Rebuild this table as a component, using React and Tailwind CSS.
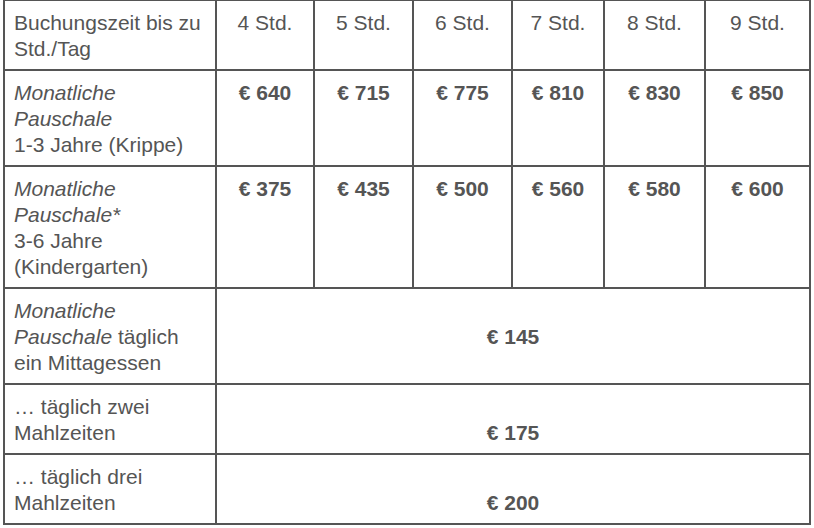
import React from "react";

const hours = ["4 Std.", "5 Std.", "6 Std.", "7 Std.", "8 Std.", "9 Std."];
const krippe = ["€ 640", "€ 715", "€ 775", "€ 810", "€ 830", "€ 850"];
const kiga = ["€ 375", "€ 435", "€ 500", "€ 560", "€ 580", "€ 600"];

const cell = "border-2 border-[#555] px-[9px] pt-[9px] pb-[7px] align-top";

export default function App() {
  return (
    <div className="bg-white min-h-screen pl-[3px] text-[#555] font-['Liberation_Sans',Arial,sans-serif] text-[21px] leading-[26px]">
      <table className="border-collapse table-fixed w-[806px] -mt-[1px]">
        <colgroup>
          <col className="w-[212px]" />
          <col className="w-[98px]" />
          <col className="w-[99px]" />
          <col className="w-[99px]" />
          <col className="w-[92px]" />
          <col className="w-[101px]" />
          <col className="w-[105px]" />
        </colgroup>
        <tbody>
          <tr>
            <td className={cell}>Buchungszeit bis zu Std./Tag</td>
            {hours.map((h) => (
              <td key={h} className={cell + " text-center"}>
                {h}
              </td>
            ))}
          </tr>
          <tr>
            <td className={cell}>
              <em>Monatliche Pauschale</em>
              <br />
              1-3 Jahre (Krippe)
            </td>
            {krippe.map((p) => (
              <td key={p} className={cell + " text-center font-bold"}>
                {p}
              </td>
            ))}
          </tr>
          <tr>
            <td className={cell}>
              <em>Monatliche Pauschale*</em>
              <br />
              3-6 Jahre (Kindergarten)
            </td>
            {kiga.map((p) => (
              <td key={p} className={cell + " text-center font-bold"}>
                {p}
              </td>
            ))}
          </tr>
          <tr>
            <td className={cell}>
              <em>Monatliche Pauschale</em> täglich ein Mittagessen
            </td>
            <td colSpan={6} className={cell + " text-center font-bold"}>
              <br />€ 145
            </td>
          </tr>
          <tr>
            <td className={cell}>… täglich zwei Mahlzeiten</td>
            <td colSpan={6} className={cell + " text-center font-bold"}>
              <br />€ 175
            </td>
          </tr>
          <tr>
            <td className={cell}>… täglich drei Mahlzeiten</td>
            <td colSpan={6} className={cell + " text-center font-bold"}>
              <br />€ 200
            </td>
          </tr>
        </tbody>
      </table>
    </div>
  );
}
